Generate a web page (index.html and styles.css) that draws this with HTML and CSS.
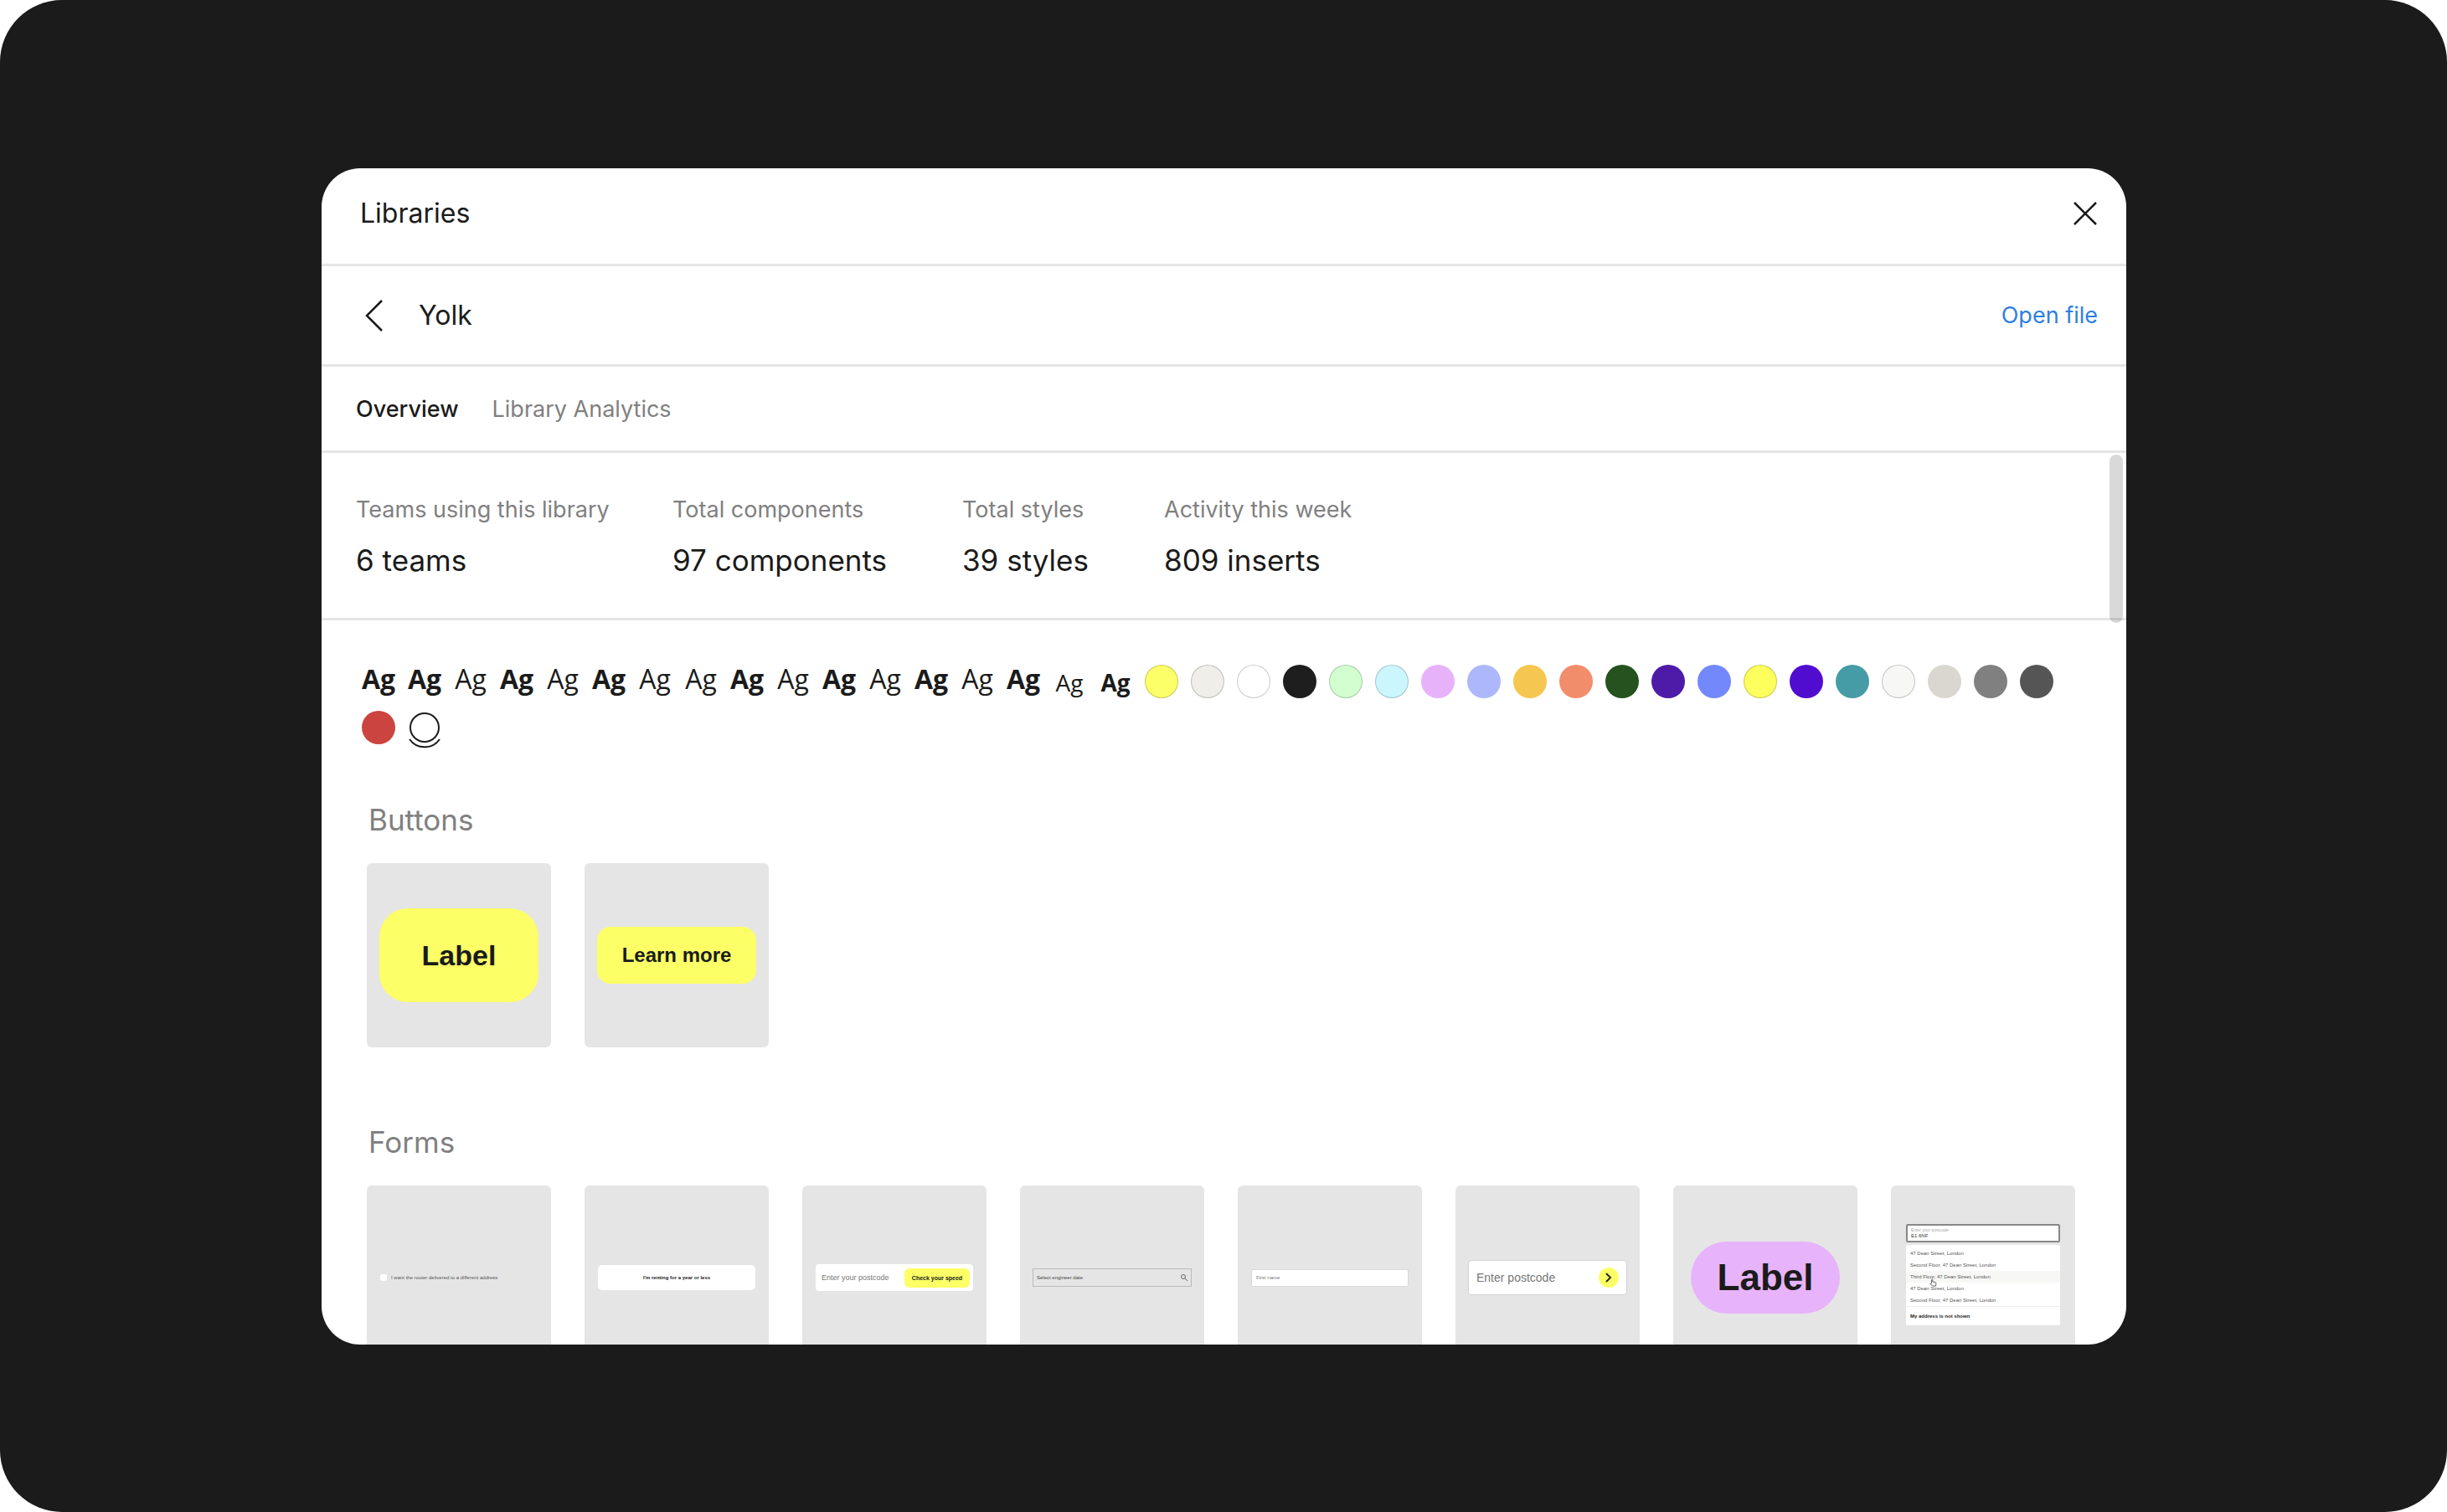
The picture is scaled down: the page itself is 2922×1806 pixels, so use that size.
FILE: index.html
```html
<!DOCTYPE html>
<html lang="en">
<head>
<meta charset="utf-8">
<title>Libraries – Yolk</title>
<link rel="stylesheet" href="styles.css">
</head>
<body>
<main class="stage">
  <section class="modal" aria-label="Libraries">
    <header class="bar bar-title">
      <h1 class="title">Libraries</h1>
      <button class="icon-button" type="button" aria-label="Close">
        <svg width="30" height="30" viewBox="0 0 30 30" fill="none" stroke="#1b1b1b" stroke-width="2.500"><path d="M2 2l26 26M28 2L2 28"/></svg>
      </button>
    </header>
    <div class="bar bar-library">
      <button class="icon-button" type="button" aria-label="Back">
        <svg width="24" height="38" viewBox="0 0 24 38" fill="none" stroke="#1b1b1b" stroke-width="2.500"><path d="M21 1L3 19l18 18"/></svg>
      </button>
      <h2 class="title">Yolk</h2>
      <a class="open-file" href="#">Open file</a>
    </div>
    <nav class="bar bar-tabs">
      <a class="tab tab-active" href="#">Overview</a>
      <a class="tab" href="#">Library Analytics</a>
    </nav>
    <div class="scroller">
      <dl class="stats">
        <div class="stat"><dt>Teams using this library</dt><dd>6 teams</dd></div>
        <div class="stat"><dt>Total components</dt><dd>97 components</dd></div>
        <div class="stat"><dt>Total styles</dt><dd>39 styles</dd></div>
        <div class="stat"><dt>Activity this week</dt><dd>809 inserts</dd></div>
      </dl>
      <ul class="styles">
        <li class="type bold">Ag</li>
        <li class="type bold">Ag</li>
        <li class="type">Ag</li>
        <li class="type bold">Ag</li>
        <li class="type">Ag</li>
        <li class="type bold">Ag</li>
        <li class="type">Ag</li>
        <li class="type">Ag</li>
        <li class="type bold">Ag</li>
        <li class="type">Ag</li>
        <li class="type bold">Ag</li>
        <li class="type">Ag</li>
        <li class="type bold">Ag</li>
        <li class="type">Ag</li>
        <li class="type bold">Ag</li>
        <li class="type small">Ag</li>
        <li class="type small bold">Ag</li>
        <li class="swatch yellow ringed"></li>
        <li class="swatch linen ringed"></li>
        <li class="swatch white ringed"></li>
        <li class="swatch black"></li>
        <li class="swatch mint ringed"></li>
        <li class="swatch ice ringed"></li>
        <li class="swatch lilac"></li>
        <li class="swatch periwinkle"></li>
        <li class="swatch amber"></li>
        <li class="swatch coral"></li>
        <li class="swatch forest"></li>
        <li class="swatch grape"></li>
        <li class="swatch cornflower"></li>
        <li class="swatch lemon ringed"></li>
        <li class="swatch violet"></li>
        <li class="swatch teal"></li>
        <li class="swatch snow ringed"></li>
        <li class="swatch stone"></li>
        <li class="swatch grey"></li>
        <li class="swatch charcoal"></li>
        <li class="swatch red"></li>
        <li class="effect"><svg width="40" height="48" viewBox="0 0 40 48" fill="none" stroke="#1b1b1b" stroke-width="2"><circle cx="20" cy="20" r="17"/><path d="M2 34a22 22 0 0 0 36 0"/></svg></li>
      </ul>
      <section class="group">
        <h3 class="group-title">Buttons</h3>
        <div class="cards">
          <div class="card"><button class="demo-button" type="button">Label</button></div>
          <div class="card"><button class="demo-button demo-learn" type="button">Learn more</button></div>
        </div>
      </section>
      <section class="group">
        <h3 class="group-title">Forms</h3>
        <div class="cards">
          <div class="card">
            <label class="demo-check"><input type="checkbox">I want the router delivered to a different address</label>
          </div>
          <div class="card"><button class="demo-choice" type="button">I'm renting for a year or less</button></div>
          <div class="card">
            <div class="demo-speed">
              <input type="text" placeholder="Enter your postcode" aria-label="Your postcode">
              <button type="button">Check your speed</button>
            </div>
          </div>
          <div class="card">
            <div class="demo-date">
              <input type="text" placeholder="Select engineer date" aria-label="Engineer date">
              <svg width="8" height="8" viewBox="0 0 8 8" fill="none" stroke="#666"><circle cx="3" cy="3" r="2.5"/><path d="M5 5l3 3"/></svg>
            </div>
          </div>
          <div class="card"><input class="demo-name" type="text" placeholder="First name" aria-label="First name"></div>
          <div class="card">
            <div class="demo-postcode">
              <input type="text" placeholder="Enter postcode" aria-label="Postcode">
              <button type="button" aria-label="Go"><svg width="8" height="12" viewBox="0 0 8 12" fill="none" stroke="#2b2b12" stroke-width="2"><path d="M1 1l5 5-5 5"/></svg></button>
            </div>
          </div>
          <div class="card"><button class="demo-pill" type="button">Label</button></div>
          <div class="card">
            <div class="demo-address">
              <label class="address-field">Enter your postcode<input type="text" value="E1 6NF"></label>
              <ul class="address-list">
                <li>47 Dean Street, London</li>
                <li>Second Floor, 47 Dean Street, London</li>
                <li class="hovered">Third Floor, 47 Dean Street, London
                  <svg class="pointer" width="9" height="10" viewBox="0 0 9 10" fill="#fff" stroke="#666"><path d="M2.5 5V1.5q.7-1 1.4 0V4l3 .6q1.2.3 1 1.500L7.500 9h-4L1 6.500q0-1 1.500-.5z"/></svg>
                </li>
                <li>47 Dean Street, London</li>
                <li>Second Floor, 47 Dean Street, London</li>
                <li class="not-shown">My address is not shown</li>
              </ul>
            </div>
          </div>
        </div>
      </section>
      <div class="scrollbar"></div>
    </div>
  </section>
</main>
</body>
</html>
```
FILE: styles.css
```css
* {
  box-sizing: border-box;
}

body,
h1,
h2,
h3,
dl,
dd,
ul {
  margin: 0;
}

ul {
  padding: 0;
  list-style: none;
}

body {
  background: #fff;
  color: #1b1b1b;
  font-family: Inter, "Liberation Sans", sans-serif;
}

button,
input {
  margin: 0;
  padding: 0;
  border: 0;
  background: none;
  color: inherit;
  font: inherit;
}

a {
  text-decoration: none;
}

svg {
  display: block;
}

.stage {
  display: flex;
  height: 100vh;
  padding: 201px 383px 200px 384px;
  border-radius: 74px;
  background: #1b1b1b;
}

.modal {
  display: flex;
  flex: 1;
  flex-direction: column;
  overflow: hidden;
  border-radius: 46px;
  background: #fff;
}

.bar {
  display: flex;
  flex: none;
  align-items: center;
  border-bottom: 3px solid #e5e5e5;
}

.bar-title {
  justify-content: space-between;
  height: 117px;
  padding: 0 34px 6px 46px;
}

.title {
  font-size: 32px;
  font-weight: 400;
  line-height: 40px;
}

.icon-button {
  display: block;
}

.bar-library {
  height: 120px;
  padding: 0 34px 0 51px;
}

.bar-library .title {
  margin-left: 41px;
}

.open-file {
  margin-left: auto;
  color: #2f7fe0;
  font-size: 27px;
}

.bar-tabs {
  height: 103px;
  padding: 0 41px;
  gap: 40px;
}

.tab {
  color: #808080;
  font-size: 27px;
}

.tab-active {
  color: #1b1b1b;
  font-weight: 500;
}

.scroller {
  position: relative;
  flex: 1;
  overflow: hidden;
}

.stats {
  display: flex;
  height: 200px;
  padding: 50px 41px 0;
  border-bottom: 3px solid #e5e5e5;
}

.stat:nth-child(1) {
  width: 378px;
}

.stat:nth-child(2) {
  width: 346px;
}

.stat:nth-child(3) {
  width: 241px;
}

.stat dt {
  color: #808080;
  font-size: 27px;
  line-height: 36px;
}

.stat dd {
  margin-top: 20px;
  font-size: 35px;
  line-height: 44px;
}

.styles {
  display: flex;
  flex-wrap: wrap;
  gap: 15px;
  padding: 53px 60px 0 48px;
}

.type,
.swatch,
.effect {
  width: 40px;
  height: 40px;
}

.type {
  font-family: "Open Sans", sans-serif;
  font-size: 32px;
  line-height: 34px;
  text-align: center;
}

.bold {
  font-weight: 700;
}

.type.small {
  font-size: 28px;
  line-height: 42px;
}

.swatch {
  border-radius: 50%;
}

.ringed {
  border: 1px solid rgba(0, 0, 0, 0.2);
}

.yellow { background: #fdff68; }
.linen { background: #efeee9; }
.white { background: #fff; }
.black { background: #1e1e1e; }
.mint { background: #d2fed0; }
.ice { background: #cbf6fe; }
.lilac { background: #e8b2fa; }
.periwinkle { background: #acb8fb; }
.amber { background: #f5c750; }
.coral { background: #f28d6b; }
.forest { background: #25521f; }
.grape { background: #4d1ba8; }
.cornflower { background: #7388fa; }
.lemon { background: #fdff5c; }
.violet { background: #500dd0; }
.teal { background: #469ca6; }
.snow { background: #f7f7f6; }
.stone { background: #dad7d0; }
.grey { background: #808080; }
.charcoal { background: #555; }
.red { background: #cc4440; }

.group {
  padding: 0 54px;
}

.styles + .group {
  padding-top: 68px;
}

.group-title {
  padding-left: 2px;
  color: #808080;
  font-size: 35px;
  font-weight: 400;
  line-height: 44px;
}

.cards {
  display: grid;
  grid-template-columns: repeat(8, 220px);
  gap: 40px;
  margin: 30px 0 91px;
}

.card {
  display: flex;
  align-items: center;
  justify-content: center;
  height: 220px;
  border-radius: 6px;
  background: #e5e5e5;
  font-family: "Liberation Sans", sans-serif;
  font-size: 6px;
}

.demo-button {
  width: 190px;
  height: 112px;
  border-radius: 34px;
  background: #fcff66;
  font-size: 34px;
  font-weight: 700;
}

.demo-learn {
  height: 68px;
  border-radius: 16px;
  font-size: 24px;
}

.demo-check {
  display: flex;
  align-items: center;
  width: 188px;
  gap: 5px;
  color: #555;
}

.demo-check input {
  width: 8px;
  height: 8px;
  border-radius: 2px;
  background: #fff;
  appearance: none;
}

.demo-choice {
  width: 188px;
  height: 30px;
  border-radius: 5px;
  background: #fff;
  font-weight: 700;
}

.card input::placeholder {
  color: #777;
  opacity: 1;
}

.demo-speed {
  display: flex;
  align-items: center;
  width: 188px;
  height: 32px;
  padding: 0 4px 0 7px;
  border-radius: 4px;
  background: #fff;
  font-size: 9px;
}

.demo-speed input,
.demo-date input,
.demo-postcode input {
  flex: 1;
  min-width: 0;
}

.demo-speed button {
  width: 78px;
  height: 23px;
  border-radius: 6px;
  background: #fcff66;
  font-size: 7px;
  font-weight: 700;
}

.demo-date {
  display: flex;
  align-items: center;
  width: 190px;
  height: 22px;
  padding: 0 4px;
  border: 1px solid #bbb;
}

.card .demo-date input::placeholder {
  color: #444;
}

.demo-name {
  width: 188px;
  height: 21px;
  padding-left: 5px;
  border: 1px solid #d8d8d8;
  border-radius: 2px;
  background: #fff;
}

.demo-postcode {
  display: flex;
  align-items: center;
  width: 190px;
  height: 42px;
  padding: 0 9px;
  border: 1px solid #d2d2d2;
  border-radius: 4px;
  background: #fff;
  font-size: 14px;
}

.demo-postcode button {
  display: grid;
  width: 24px;
  height: 24px;
  place-items: center;
  border-radius: 50%;
  background: #fcff66;
}

.demo-pill {
  width: 178px;
  height: 86px;
  border-radius: 43px;
  background: #e7b3fa;
  font-size: 44px;
  font-weight: 700;
}

.demo-address {
  width: 184px;
  min-height: 128px;
  color: #555;
}

.address-field {
  display: block;
  height: 22px;
  margin-bottom: 3px;
  padding: 2px 4px;
  border: 2px solid #888;
  border-radius: 2px;
  background: #fff;
  color: #aaa;
  font-size: 5px;
  line-height: 6px;
}

.address-field input {
  display: block;
  width: 100%;
  height: 8px;
  color: #333;
  font-size: 6px;
}

.address-list {
  padding-top: 3px;
  border-radius: 2px;
  background: #fff;
}

.address-list li {
  position: relative;
  height: 14px;
  padding-left: 5px;
  line-height: 14px;
}

.address-list .hovered {
  background: #f7f7f6;
}

.address-list .not-shown {
  height: 23px;
  border-top: 1px solid #eee;
  color: #1b1b1b;
  font-weight: 700;
  line-height: 22px;
}

.pointer {
  position: absolute;
  top: 9px;
  left: 28px;
  z-index: 1;
}

.scrollbar {
  position: absolute;
  top: 2px;
  right: 4px;
  width: 16px;
  height: 201px;
  border-radius: 8px;
  background: rgba(0, 0, 0, 0.15);
}
```
